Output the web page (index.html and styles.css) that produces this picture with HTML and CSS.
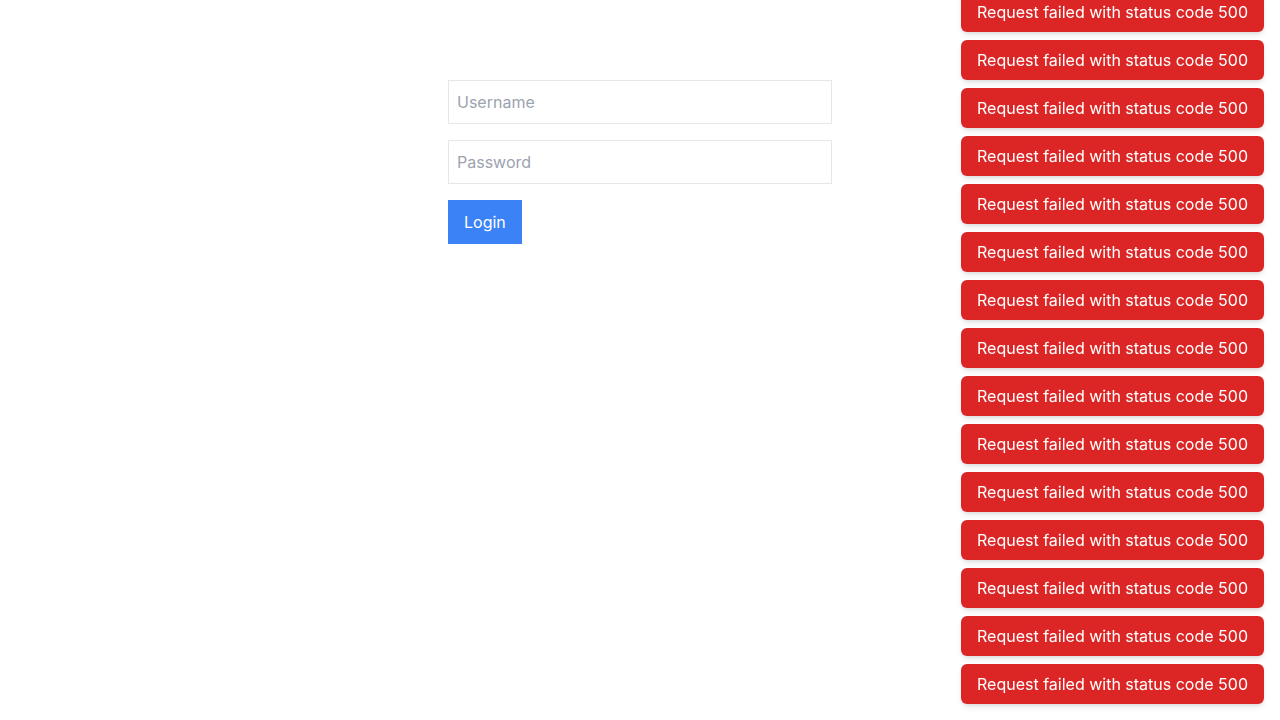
FILE: index.html
```html
<!DOCTYPE html>
<html lang="en">
<head>
<meta charset="utf-8">
<meta name="viewport" content="width=device-width, initial-scale=1">
<title>Login</title>
<link rel="stylesheet" href="styles.css">
</head>
<body>
<main class="page">
<form class="login-form">
<input class="field" type="text" name="username" placeholder="Username" aria-label="Username">
<input class="field" type="password" name="password" placeholder="Password" aria-label="Password">
<button class="login-button" type="button">Login</button>
</form>
</main>
<div class="toasts" role="status">
<div class="toast">Request failed with status code 500</div>
<div class="toast">Request failed with status code 500</div>
<div class="toast">Request failed with status code 500</div>
<div class="toast">Request failed with status code 500</div>
<div class="toast">Request failed with status code 500</div>
<div class="toast">Request failed with status code 500</div>
<div class="toast">Request failed with status code 500</div>
<div class="toast">Request failed with status code 500</div>
<div class="toast">Request failed with status code 500</div>
<div class="toast">Request failed with status code 500</div>
<div class="toast">Request failed with status code 500</div>
<div class="toast">Request failed with status code 500</div>
<div class="toast">Request failed with status code 500</div>
<div class="toast">Request failed with status code 500</div>
<div class="toast">Request failed with status code 500</div>
</div>
</body>
</html>
```
FILE: styles.css
```css
* {
  box-sizing: border-box;
}

body {
  margin: 0;
  background: #fff;
  color: #000;
  font-family: Inter, sans-serif;
  font-size: 16px;
  line-height: 24px;
}

.page {
  padding: 80px 16px 0;
}

.login-form {
  display: flex;
  flex-direction: column;
  align-items: flex-start;
  gap: 16px;
  max-width: 384px;
  margin: 0 auto;
}

.field {
  width: 100%;
  height: 44px;
  padding: 8px;
  border: 1px solid #e5e7eb;
  border-radius: 0;
  background: #fff;
  color: inherit;
  font: inherit;
}

.field::placeholder {
  color: #9ca3af;
  opacity: 1;
}

.login-button {
  padding: 10px 16px;
  border: 0;
  background: #3b82f6;
  color: #fff;
  font: inherit;
  cursor: pointer;
}

.toasts {
  position: fixed;
  right: 16px;
  bottom: 16px;
  display: flex;
  flex-direction: column;
  gap: 8px;
}

.toast {
  padding: 8px 16px;
  border-radius: 6px;
  background: #dc2626;
  color: #fff;
  box-shadow: 0 4px 6px -1px rgb(0 0 0 / 0.1), 0 2px 4px -2px rgb(0 0 0 / 0.1);
}
```
